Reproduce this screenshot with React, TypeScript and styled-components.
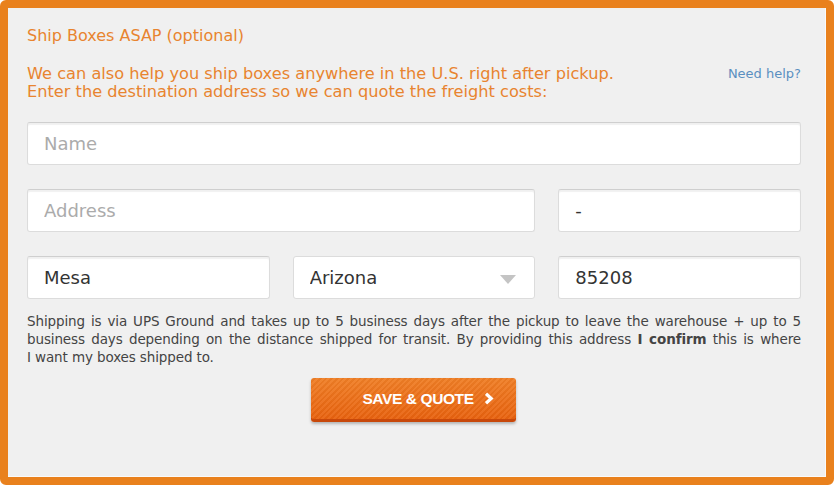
import styled, { createGlobalStyle } from 'styled-components';

const GlobalStyle = createGlobalStyle`
  html, body {
    margin: 0;
    padding: 0;
    background: #ffffff;
  }
  * {
    box-sizing: border-box;
  }
`;

const FONT = `"DejaVu Sans", "Liberation Sans", sans-serif`;

const Frame = styled.div`
  width: 834px;
  height: 485px;
  border: 8px solid #e9811d;
  border-radius: 6px;
  background: #f0f0f0;
  padding: 18px 25px 0 19px;
  font-family: ${FONT};
  box-shadow: inset -1px -1px 0 #fafafa;
`;

const Title = styled.div`
  font-size: 16px;
  line-height: 20px;
  color: #e8842f;
`;

const IntroRow = styled.div`
  display: flex;
  justify-content: space-between;
  align-items: flex-start;
  margin-top: 19px;
`;

const Intro = styled.p`
  margin: 0;
  font-size: 16.2px;
  line-height: 18px;
  color: #e8842f;
`;

const HelpLink = styled.a`
  font-size: 13px;
  line-height: 18px;
  color: #5a8fc0;
  text-decoration: none;
  cursor: pointer;
`;

const Fields = styled.div`
  display: grid;
  grid-template-columns: repeat(3, 1fr);
  column-gap: 23px;
  row-gap: 24px;
  margin-top: 21px;
`;

const Field = styled.div<{ $span?: number }>`
  position: relative;
  grid-column: span ${(p) => p.$span ?? 1};
`;

const Input = styled.input`
  display: block;
  width: 100%;
  height: 43px;
  border: 1px solid #dcdcdc;
  border-top-color: #cfcfcf;
  border-radius: 3px;
  background: #ffffff;
  box-shadow: inset 0 2px 1px rgba(0, 0, 0, 0.06);
  padding: 0 16px;
  font-family: ${FONT};
  font-size: 18px;
  color: #333333;
  outline: none;

  &::placeholder {
    color: #ababab;
  }
`;

const SelectBox = styled.select`
  display: block;
  width: 100%;
  height: 43px;
  border: 1px solid #dcdcdc;
  border-radius: 3px;
  background: #ffffff;
  padding: 0 16px;
  font-family: ${FONT};
  font-size: 18px;
  color: #333333;
  appearance: none;
  outline: none;
`;

const Caret = styled.span`
  position: absolute;
  right: 19px;
  top: 19px;
  width: 0;
  height: 0;
  border-left: 8px solid transparent;
  border-right: 8px solid transparent;
  border-top: 9px solid #c4c4c4;
  pointer-events: none;
`;

const Note = styled.p`
  margin: 13px 0 0;
  font-size: 13.5px;
  letter-spacing: -0.12px;
  line-height: 18px;
  color: #444444;
  text-align: justify;

  b {
    font-weight: bold;
  }
`;

const ButtonRow = styled.div`
  display: flex;
  justify-content: center;
  margin-top: 12px;
`;

const SaveButton = styled.button`
  display: flex;
  align-items: center;
  justify-content: center;
  gap: 10px;
  width: 205px;
  height: 44px;
  margin-right: 2px;
  border: none;
  border-radius: 3px;
  padding: 0 0 3px 30px;
  color: #ffffff;
  font-family: "Liberation Sans", Arial, sans-serif;
  font-size: 15.5px;
  font-weight: bold;
  letter-spacing: -0.4px;
  cursor: pointer;
  background:
    repeating-linear-gradient(
      135deg,
      rgba(255, 255, 255, 0.06) 0 2px,
      rgba(0, 0, 0, 0.03) 2px 4px
    ),
    linear-gradient(#f07f26, #e8600d);
  box-shadow:
    inset 0 -3px 0 #c8480a,
    0 2px 3px rgba(0, 0, 0, 0.25);
`;

const Chevron = () => (
  <svg width="10" height="13" viewBox="0 0 10 13">
    <path d="M2 1.8 L7.2 6.5 L2 11.2" fill="none" stroke="#fff" strokeWidth="3.2" />
  </svg>
);

export default function App() {
  return (
    <>
      <GlobalStyle />
      <Frame>
        <Title>Ship Boxes ASAP (optional)</Title>

        <IntroRow>
          <Intro>
            We can also help you ship boxes anywhere in the U.S. right after pickup.
            <br />
            Enter the destination address so we can quote the freight costs:
          </Intro>
          <HelpLink>Need help?</HelpLink>
        </IntroRow>

        <Fields>
          <Field $span={3}>
            <Input placeholder="Name" />
          </Field>
          <Field $span={2}>
            <Input placeholder="Address" />
          </Field>
          <Field>
            <Input defaultValue="-" />
          </Field>
          <Field>
            <Input defaultValue="Mesa" />
          </Field>
          <Field>
            <SelectBox defaultValue="AZ">
              <option value="AZ">Arizona</option>
            </SelectBox>
            <Caret />
          </Field>
          <Field>
            <Input defaultValue="85208" />
          </Field>
        </Fields>

        <Note>
          Shipping is via UPS Ground and takes up to 5 business days after the pickup to leave
          the warehouse + up to 5 business days depending on the distance shipped for transit.
          By providing this address <b>I confirm</b> this is where I&nbsp;want my boxes shipped to.
        </Note>

        <ButtonRow>
          <SaveButton>
            SAVE &amp; QUOTE
            <Chevron />
          </SaveButton>
        </ButtonRow>
      </Frame>
    </>
  );
}
